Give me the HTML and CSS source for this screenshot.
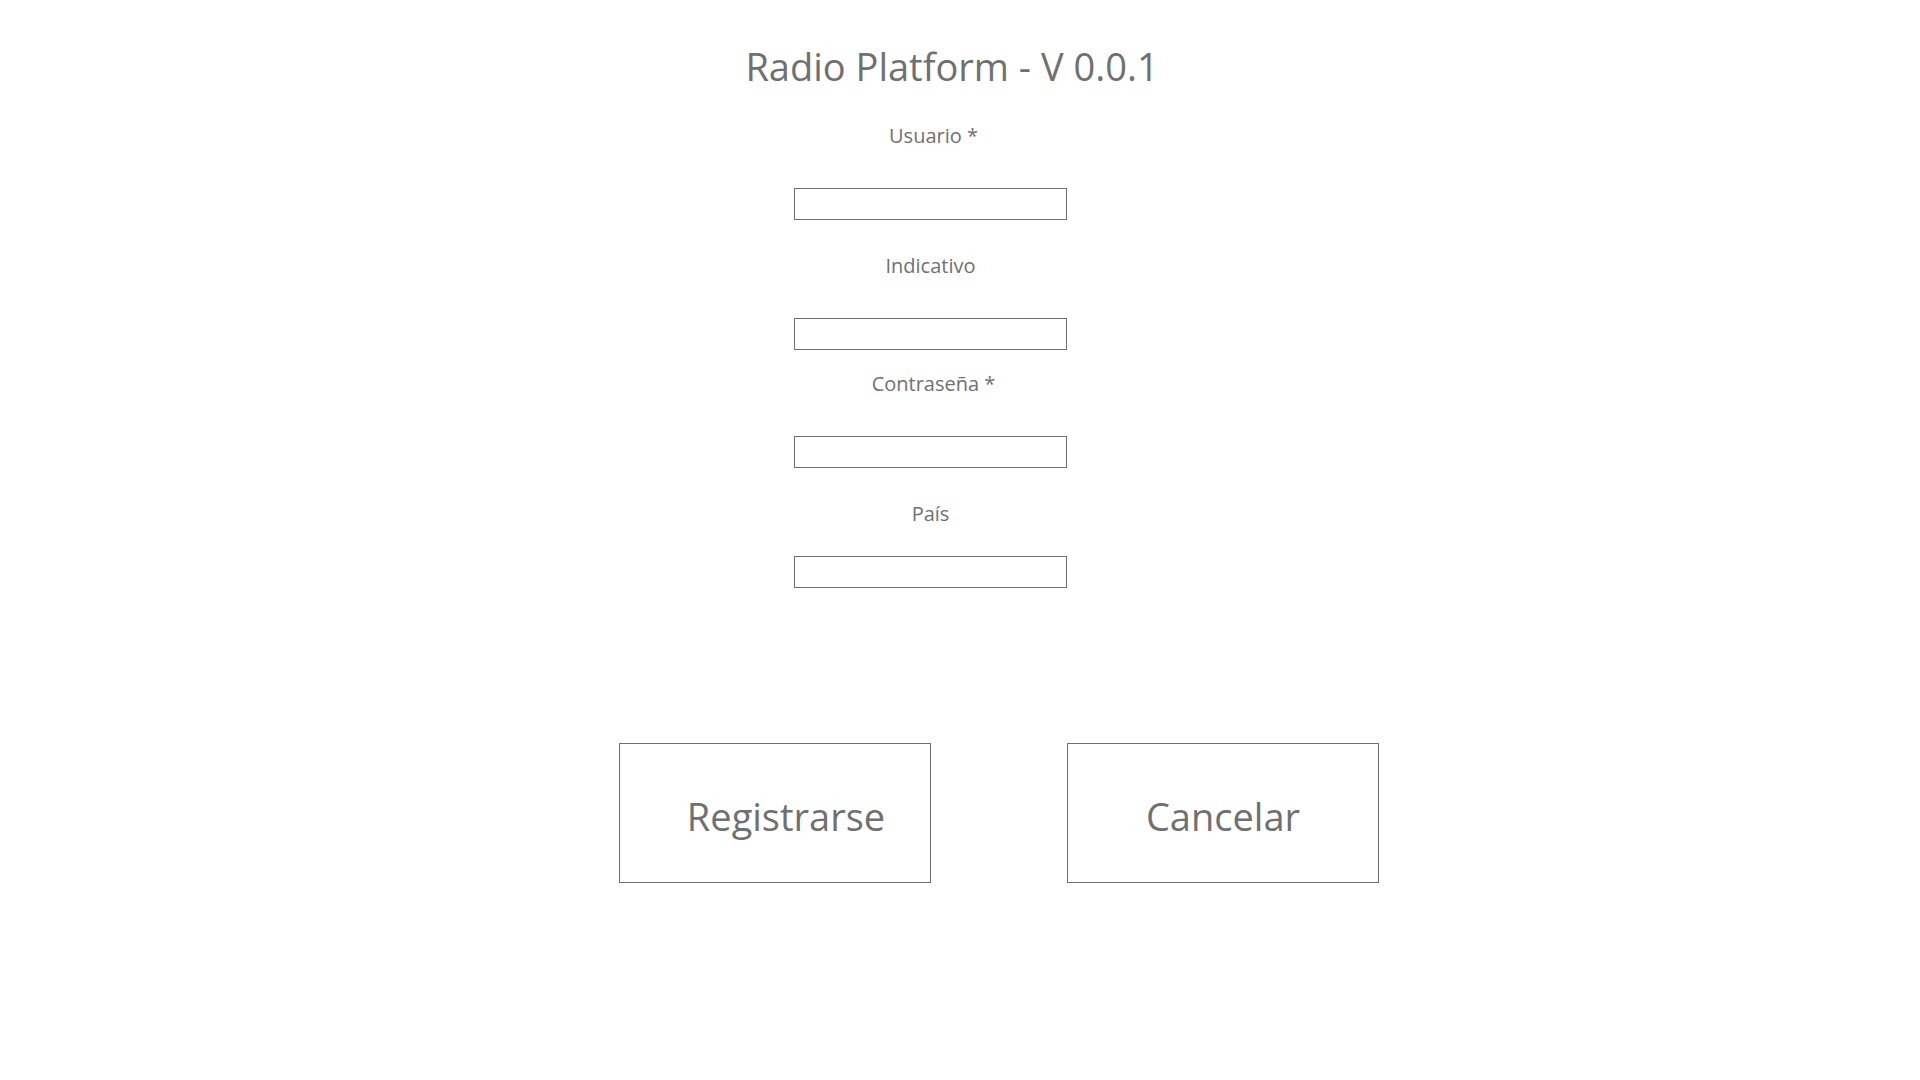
FILE: index.html
```html
<!DOCTYPE html>
<html lang="es">
<head>
<meta charset="utf-8">
<meta name="viewport" content="width=device-width, initial-scale=1">
<title>Radio Platform</title>
<link rel="stylesheet" href="styles.css">
</head>
<body>
<main class="page">
  <h1 class="title">Radio Platform - V 0.0.1</h1>
  <form class="form">
    <div class="fields">
      <div class="field">
        <label class="label label-required" for="usuario">Usuario *</label>
        <input class="input" id="usuario" type="text" required>
      </div>
      <div class="field field-spaced">
        <label class="label" for="indicativo">Indicativo</label>
        <input class="input" id="indicativo" type="text">
      </div>
      <div class="field field-close">
        <label class="label label-required" for="contrasena">Contraseña *</label>
        <input class="input" id="contrasena" type="password" required>
      </div>
      <div class="field field-spaced field-tight">
        <label class="label" for="pais">País</label>
        <input class="input" id="pais" type="text">
      </div>
    </div>
    <div class="actions">
      <button class="button button-submit" type="submit">Registrarse</button>
      <button class="button" type="button">Cancelar</button>
    </div>
  </form>
</main>
</body>
</html>
```

FILE: styles.css
```css
* {
  box-sizing: border-box;
}

body {
  margin: 0;
  background: #fff;
  color: #707070;
  font-family: "Segoe UI", "Open Sans", "Noto Sans", sans-serif;
}

.page {
  padding: 39px 0 40px;
}

.title {
  margin: 0;
  padding-right: 16px;
  font-size: 38px;
  font-weight: 400;
  line-height: 54px;
  text-align: center;
}

.form {
  display: flex;
  flex-direction: column;
  gap: 155px;
  padding-top: 29px;
}

.fields {
  display: flex;
  flex-direction: column;
  align-items: center;
  padding-right: 59px;
}

.field {
  display: flex;
  flex-direction: column;
  align-items: center;
  gap: 38px;
}

.field-spaced {
  margin-top: 32px;
}

.field-close {
  margin-top: 20px;
}

.field-tight {
  gap: 28px;
}

.label {
  font-size: 20px;
  line-height: 28px;
}

.label-required {
  padding-left: 6px;
}

.input {
  width: 273px;
  height: 32px;
  padding: 0 8px;
  border: 1px solid #707070;
  border-radius: 0;
  background: #fff;
  color: inherit;
  font: inherit;
  font-size: 20px;
}

.actions {
  display: flex;
  flex-wrap: wrap;
  justify-content: center;
  gap: 136px;
  padding-left: 78px;
}

.button {
  width: 312px;
  height: 140px;
  padding: 6px 0 0;
  border: 1px solid #707070;
  border-radius: 0;
  background: #fff;
  color: inherit;
  font: inherit;
  font-size: 38px;
  line-height: 54px;
}

.button-submit {
  padding-left: 22px;
}
```
